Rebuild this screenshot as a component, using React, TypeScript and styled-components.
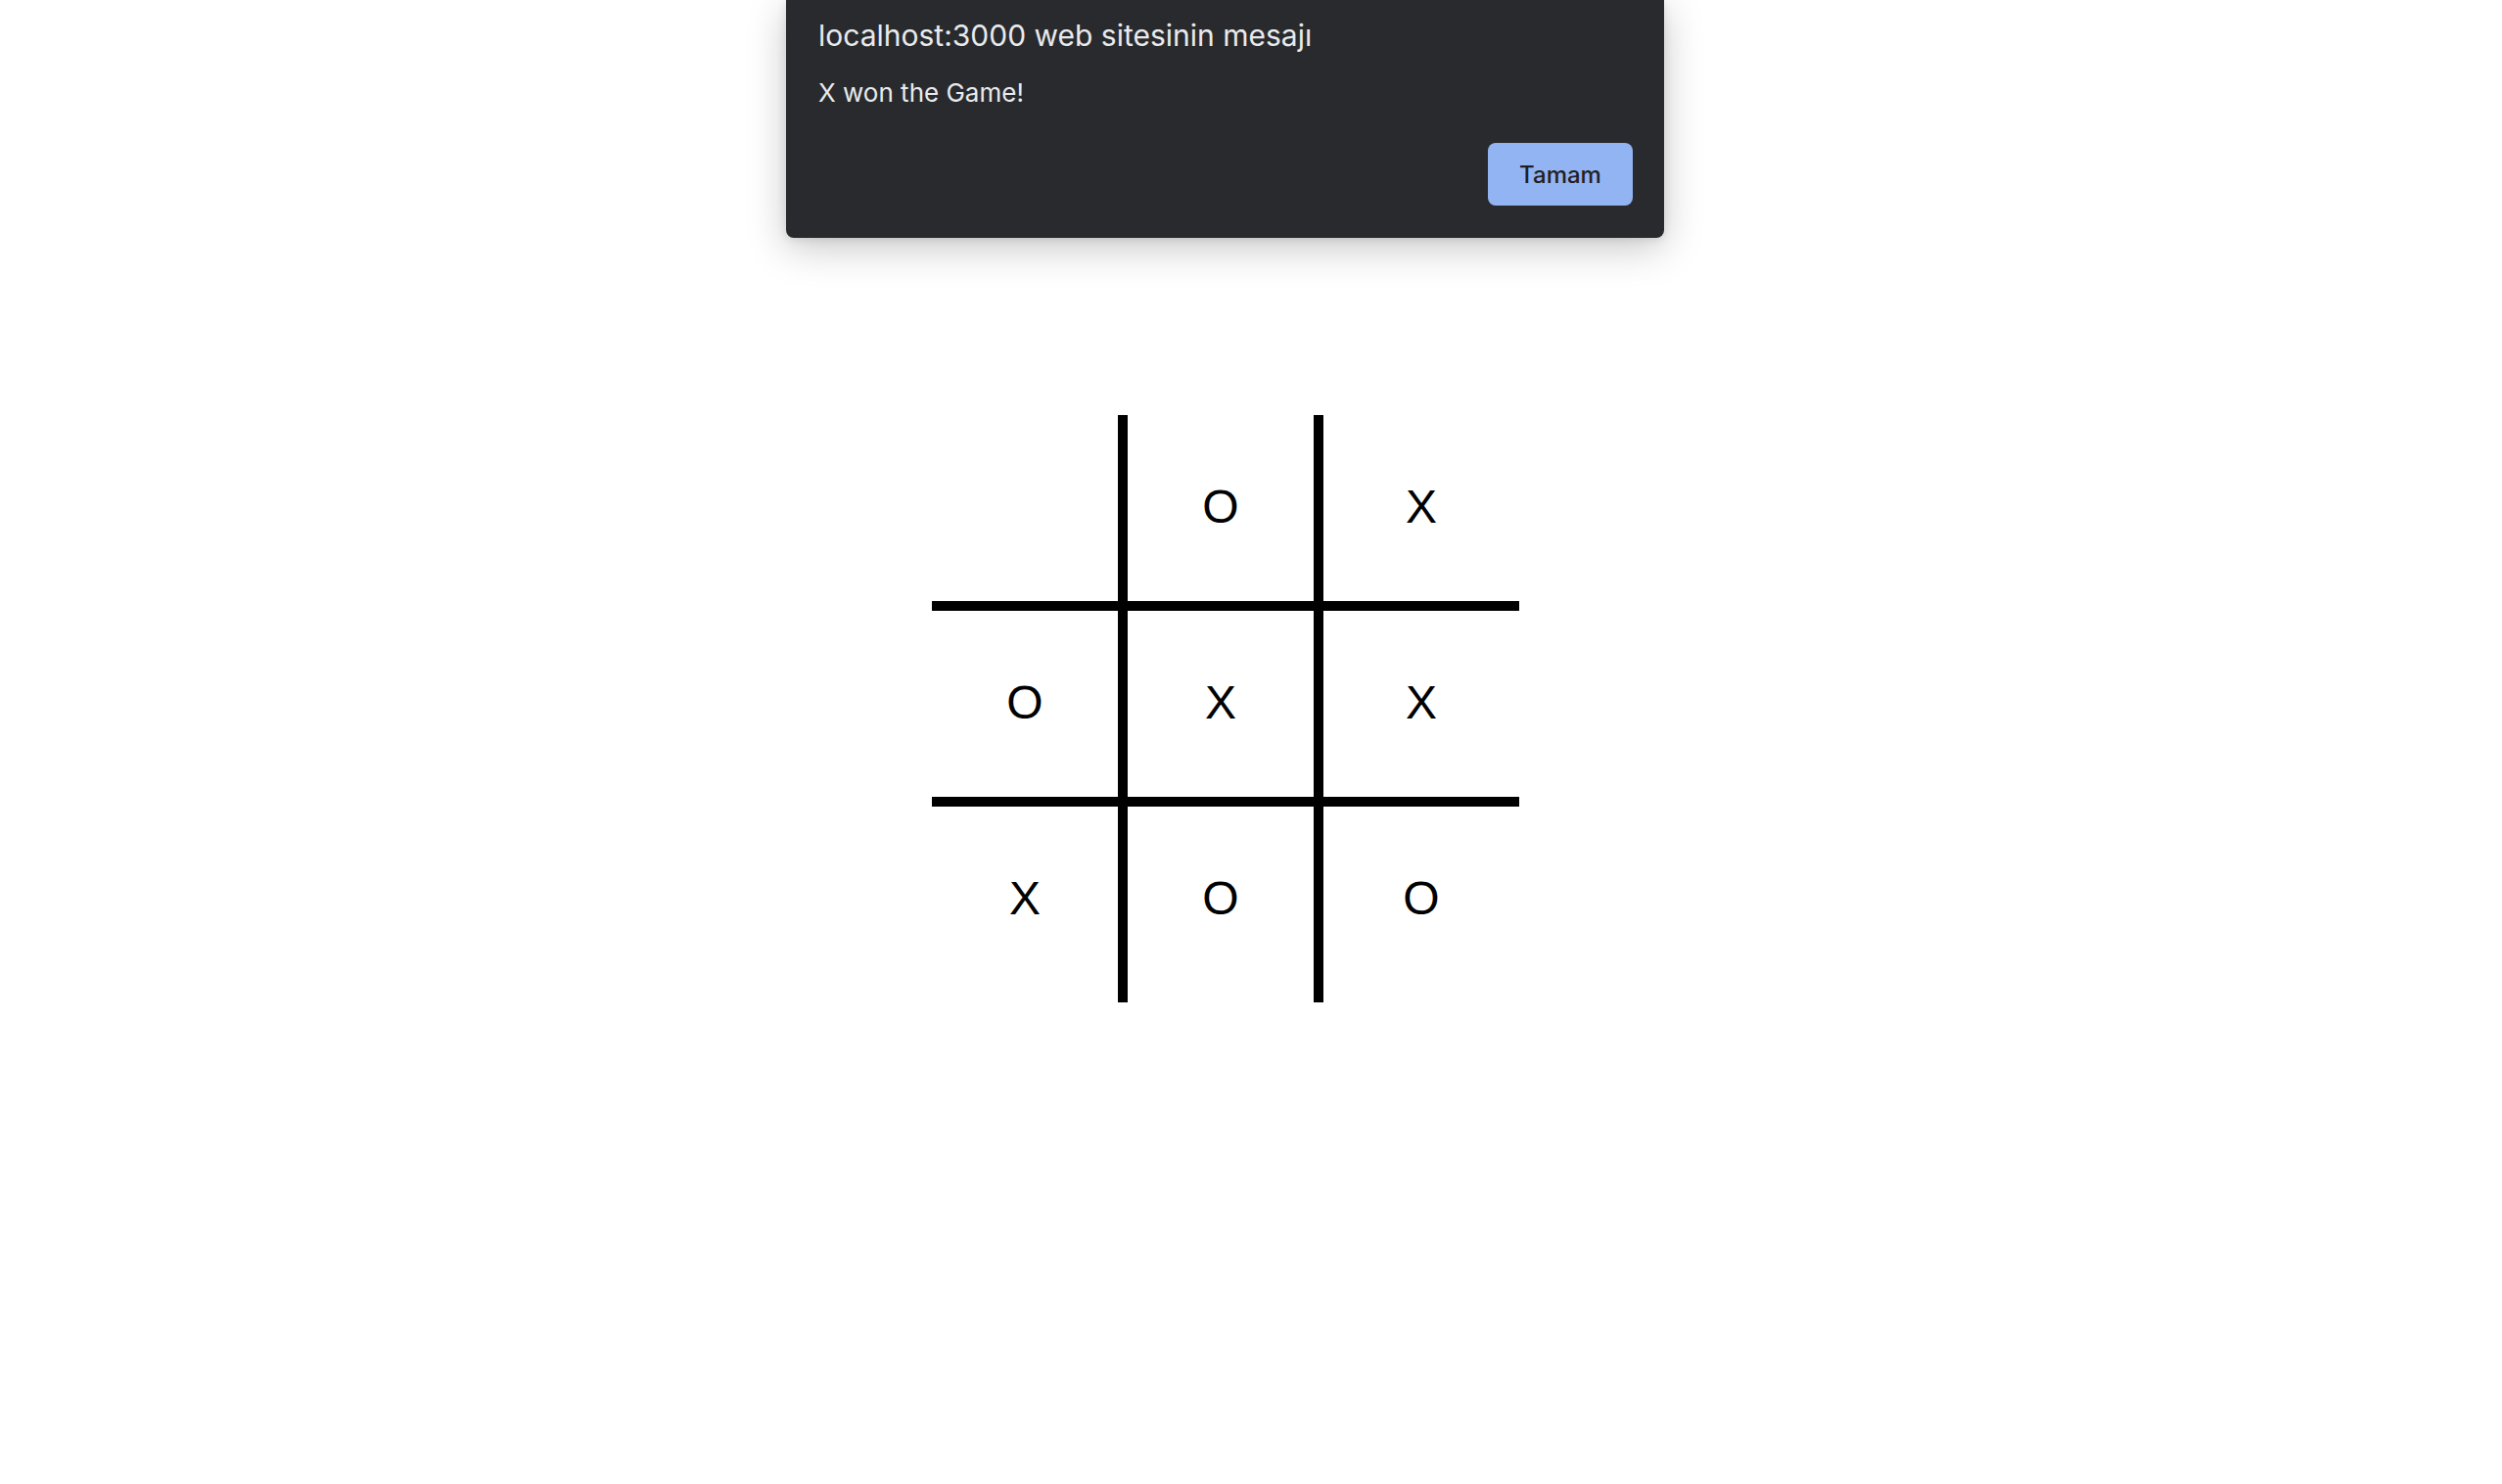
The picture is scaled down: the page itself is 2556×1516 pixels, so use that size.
import React from "react";
import styled, { createGlobalStyle } from "styled-components";

const Global = createGlobalStyle`
  html, body { margin: 0; padding: 0; background: #ffffff; }
  body { font-family: "Liberation Sans", Arial, sans-serif; }
`;

const Page = styled.div`
  min-height: 1516px;
  display: flex;
  justify-content: center;
  align-items: flex-start;
  padding: 424px 52px 0 0;
  box-sizing: border-box;
`;

const Board = styled.div`
  display: grid;
  grid-template-columns: repeat(3, 200px);
  grid-template-rows: repeat(3, 200px);
`;

const Cell = styled.div<{ $right: boolean; $bottom: boolean }>`
  box-sizing: border-box;
  display: flex;
  align-items: center;
  justify-content: center;
  border-right: ${(p) => (p.$right ? "10px solid #000" : "none")};
  border-bottom: ${(p) => (p.$bottom ? "10px solid #000" : "none")};
  padding-bottom: ${(p) => (p.$bottom ? "3px" : "13px")};
  font-family: "Liberation Sans", Arial, sans-serif;
  font-size: 48px;
  color: #000;
`;

const Dialog = styled.div`
  position: absolute;
  top: 0;
  left: 803px;
  width: 897px;
  box-sizing: border-box;
  background: #292a2d;
  border-radius: 0 0 8px 8px;
  padding: 18px 32px 33px 33px;
  box-shadow: 0 10px 40px rgba(0, 0, 0, 0.22), 0 2px 10px rgba(0, 0, 0, 0.1);
  font-family: Inter, "Noto Sans", sans-serif;
  color: #e8eaed;
  display: flex;
  flex-direction: column;
`;

const Title = styled.div`
  font-size: 30px;
  line-height: 36px;
  font-weight: 400;
`;

const Message = styled.div`
  margin-top: 25px;
  font-size: 26px;
  line-height: 32px;
`;

const Actions = styled.div`
  display: flex;
  justify-content: flex-end;
  margin-top: 35px;
`;

const Button = styled.button`
  width: 148px;
  height: 64px;
  border: none;
  border-radius: 8px;
  background: #93b4f2;
  color: #1f2023;
  font-family: Inter, "Noto Sans", sans-serif;
  font-size: 24px;
  font-weight: 500;
  cursor: pointer;
`;

const board: string[] = ["", "O", "X", "O", "X", "X", "X", "O", "O"];

export default function App() {
  return (
    <>
      <Global />
      <Page>
        <Board>
          {board.map((v, i) => (
            <Cell key={i} $right={i % 3 < 2} $bottom={i < 6}>
              {v}
            </Cell>
          ))}
        </Board>
      </Page>
      <Dialog>
        <Title>localhost:3000 web sitesinin mesajı</Title>
        <Message>X won the Game!</Message>
        <Actions>
          <Button>Tamam</Button>
        </Actions>
      </Dialog>
    </>
  );
}
